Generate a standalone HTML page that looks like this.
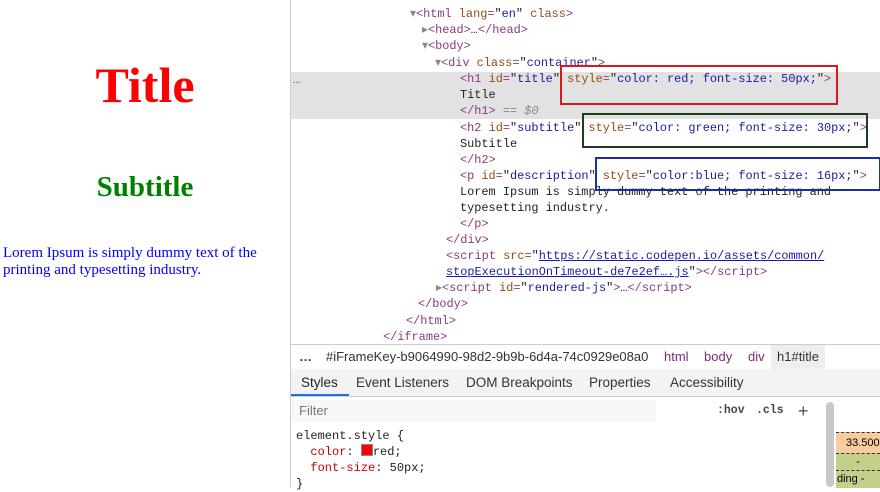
<!DOCTYPE html>
<html><head><style>
body{margin:0;width:880px;height:487px;overflow:hidden;position:relative;background:#fff;font-family:"Liberation Sans",sans-serif}
.left{position:absolute;left:0;top:0;width:290px;height:487px;border-right:1px solid #ccc;font-family:"Liberation Serif",serif}
.code{position:absolute;font-family:"Liberation Mono",monospace;font-size:11.9px;white-space:pre;color:#222;line-height:16px}
.t{color:#8b3a7e}.a{color:#9a4a10}.v{color:#1a1aa6}.g{color:#888}
.ln{position:absolute;left:0}
.box{position:absolute;border:2px solid}
</style></head><body>
<div class="left">
<div style="position:absolute;left:0;width:290px;top:57px;text-align:center;color:red;font-weight:bold;font-size:50px;line-height:56px">Title</div>
<div style="position:absolute;left:0;width:290px;top:170px;text-align:center;color:green;font-weight:bold;font-size:29px;line-height:34px">Subtitle</div>
<div style="position:absolute;left:3px;top:245px;width:280px;color:blue;font-size:15px;line-height:17px">Lorem Ipsum is simply dummy text of the printing and typesetting industry.</div>
</div>
<div style="position:absolute;left:291px;top:72px;width:589px;height:47px;background:#e2e2e2"></div>
<div class="code" style="left:293px;top:72px;color:#666">…</div>
<div class="code" style="left:0;top:6px;width:880px">
<div class="ln" style="left:410px;top:0"><span class="g">▾</span><span class="t">&lt;html</span> <span class="a">lang</span><span class="t">=</span>"<span class="v">en</span>" <span class="a">class</span><span class="t">&gt;</span></div>
<div class="ln" style="left:422px;top:16px"><span class="g">▸</span><span class="t">&lt;head&gt;</span>…<span class="t">&lt;/head&gt;</span></div>
<div class="ln" style="left:422px;top:32px"><span class="g">▾</span><span class="t">&lt;body&gt;</span></div>
<div class="ln" style="left:435px;top:49px"><span class="g">▾</span><span class="t">&lt;div</span> <span class="a">class</span><span class="t">=</span>"<span class="v">container</span>"<span class="t">&gt;</span></div>
<div class="ln" style="left:460px;top:65px"><span class="t">&lt;h1</span> <span class="a">id</span><span class="t">=</span>"<span class="v">title</span>" <span class="a">style</span><span class="t">=</span>"<span class="v">color: red; font-size: 50px;</span>"<span class="t">&gt;</span></div>
<div class="ln" style="left:460px;top:81px">Title</div>
<div class="ln" style="left:460px;top:97px"><span class="t">&lt;/h1&gt;</span> <span class="g">== <i>$0</i></span></div>
<div class="ln" style="left:460px;top:114px"><span class="t">&lt;h2</span> <span class="a">id</span><span class="t">=</span>"<span class="v">subtitle</span>" <span class="a">style</span><span class="t">=</span>"<span class="v">color: green; font-size: 30px;</span>"<span class="t">&gt;</span></div>
<div class="ln" style="left:460px;top:130px">Subtitle</div>
<div class="ln" style="left:460px;top:146px"><span class="t">&lt;/h2&gt;</span></div>
<div class="ln" style="left:460px;top:162px"><span class="t">&lt;p</span> <span class="a">id</span><span class="t">=</span>"<span class="v">description</span>" <span class="a">style</span><span class="t">=</span>"<span class="v">color:blue; font-size: 16px;</span>"<span class="t">&gt;</span></div>
<div class="ln" style="left:460px;top:178px">Lorem Ipsum is simply dummy text of the printing and</div>
<div class="ln" style="left:460px;top:194px">typesetting industry.</div>
<div class="ln" style="left:460px;top:210px"><span class="t">&lt;/p&gt;</span></div>
<div class="ln" style="left:446px;top:226px"><span class="t">&lt;/div&gt;</span></div>
<div class="ln" style="left:446px;top:242px"><span class="t">&lt;script</span> <span class="a">src</span><span class="t">=</span>"<span class="v" style="text-decoration:underline">https://static.codepen.io/assets/common/</span></div>
<div class="ln" style="left:446px;top:258px"><span class="v" style="text-decoration:underline">stopExecutionOnTimeout-de7e2ef….js</span>"<span class="t">&gt;&lt;/script&gt;</span></div>
<div class="ln" style="left:436px;top:274px"><span class="g">▸</span><span class="t">&lt;script</span> <span class="a">id</span><span class="t">=</span>"<span class="v">rendered-js</span>"<span class="t">&gt;</span>…<span class="t">&lt;/script&gt;</span></div>
<div class="ln" style="left:418px;top:290px"><span class="t">&lt;/body&gt;</span></div>
<div class="ln" style="left:406px;top:307px"><span class="t">&lt;/html&gt;</span></div>
<div class="ln" style="left:383px;top:323px"><span class="t">&lt;/iframe&gt;</span></div>
</div>
<div class="box" style="left:560px;top:65px;width:274px;height:36px;border-color:#d01c1c"></div>
<div class="box" style="left:582px;top:113px;width:282px;height:31px;border-color:#1d3d1d"></div>
<div class="box" style="left:595px;top:157px;width:282px;height:30px;border-color:#1a2fa0"></div>
<div style="position:absolute;left:291px;top:344px;width:589px;height:24px;border-top:1px solid #ccc;border-bottom:1px solid #ddd;font-size:13px;line-height:24px;color:#333">
<span style="position:absolute;left:8px;font-weight:bold">…</span>
<span style="position:absolute;left:35px">#iFrameKey-b9064990-98d2-9b9b-6d4a-74c0929e08a0</span>
<span style="position:absolute;left:373px;color:#7a2a7a">html</span>
<span style="position:absolute;left:413px;color:#7a2a7a">body</span>
<span style="position:absolute;left:457px;color:#7a2a7a">div</span>
<span style="position:absolute;left:480px;padding:0 6px;background:#eee">h1#title</span>
</div>
<div style="position:absolute;left:291px;top:369px;width:589px;height:27px;background:#f3f3f3;border-bottom:1px solid #ccc;font-size:13.5px;line-height:27px;color:#333">
<span style="position:absolute;left:10px;color:#222">Styles</span>
<div style="position:absolute;left:0;top:25px;width:58px;height:2px;background:#1a73e8"></div>
<span style="position:absolute;left:65px">Event Listeners</span>
<span style="position:absolute;left:175px">DOM Breakpoints</span>
<span style="position:absolute;left:298px">Properties</span>
<span style="position:absolute;left:379px">Accessibility</span>
</div>
<div style="position:absolute;left:291px;top:398px;width:545px;height:26px;font-size:13px;line-height:26px">
<div style="position:absolute;left:0;top:2px;width:365px;height:22px;background:#f7f7f7"></div>
<span style="position:absolute;left:8px;color:#777">Filter</span>
<span style="position:absolute;left:426px;font-family:'Liberation Mono',monospace;font-size:11.5px;font-weight:bold;color:#444">:hov</span>
<span style="position:absolute;left:465px;font-family:'Liberation Mono',monospace;font-size:11.5px;font-weight:bold;color:#444">.cls</span>
<span style="position:absolute;left:507px;font-size:18px;color:#555">+</span>
</div>
<div style="position:absolute;left:826px;top:402px;width:8px;height:85px;background:#c8c8c8;border-radius:4px"></div>
<div style="position:absolute;left:836px;top:398px;width:44px;height:89px;background:#fff">
<div style="position:absolute;left:0;top:34px;width:44px;height:20px;background:#f9cc9d;border-top:1px dashed #333;font-size:11px;line-height:20px;text-indent:10px">33.500</div>
<div style="position:absolute;left:0;top:55px;width:44px;height:16px;background:#c3d08b;border-top:1px dashed #333;font-size:11px;line-height:16px;text-align:center">-</div>
<div style="position:absolute;left:0;top:72px;width:44px;height:17px;background:#c3d08b;border-top:1px dashed #333;font-size:11px;line-height:17px;text-indent:1px">ding -</div>
</div>
<div class="code" style="left:296px;top:428px;font-size:12px">element.style {
  <span style="color:#c80000">color</span>: <span style="display:inline-block;width:10px;height:10px;background:red;border:1px solid #888;vertical-align:-1px"></span>red;
  <span style="color:#c80000">font-size</span>: 50px;
}</div>
</body></html>
